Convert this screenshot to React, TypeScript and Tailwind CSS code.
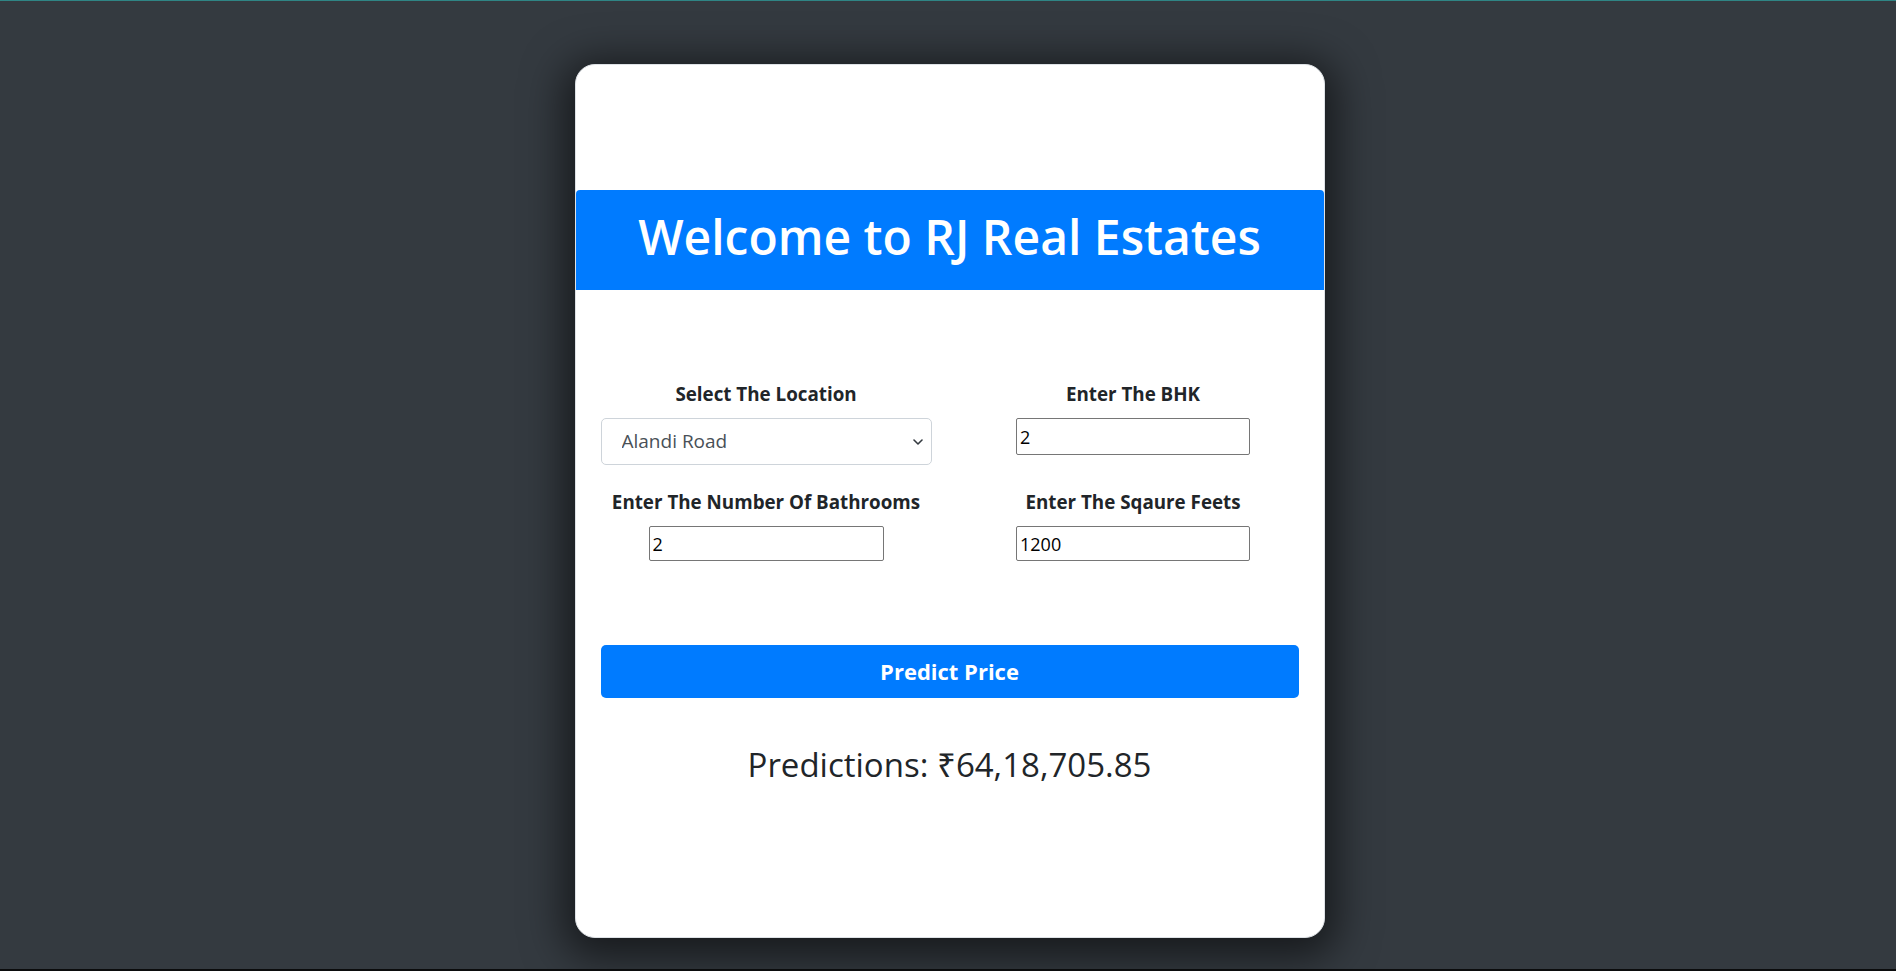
import { useState } from "react";

const locations = ["Alandi Road", "Ambegaon Budruk", "Aundh", "Baner", "Bavdhan", "Hadapsar", "Kothrud"];

export default function App() {
  const [location, setLocation] = useState("Alandi Road");
  const [bhk, setBhk] = useState("2");
  const [bath, setBath] = useState("2");
  const [sqft, setSqft] = useState("1200");

  return (
    <div className="min-h-screen flex flex-col bg-[#343a40] font-['Open_Sans',sans-serif]">
      <div className="h-px bg-[#2f8585]" />
      <div className="flex-1 flex justify-center pt-[63px] pl-[3px]">
        <div className="w-[750px] h-[874px] bg-white rounded-[20px] border border-[#dee2e6] shadow-[0_8px_40px_12px_rgba(0,0,0,0.55)] flex flex-col pt-[125px]">
          {/* Banner */}
          <div className="h-[100px] bg-[#007bff] rounded-t-[4px] flex items-center justify-center pb-[6px]">
            <h1 className="text-white text-[48px] font-semibold leading-none">Welcome to RJ Real Estates</h1>
          </div>

          {/* Form */}
          <div className="px-[25px] mt-[92px]">
            <div className="grid grid-cols-2 gap-x-[36px] gap-y-[25px]">
              <div className="flex flex-col items-center">
                <label className="text-[18.8px] leading-[24px] font-bold text-[#212529] mb-[12px]">Select The Location</label>
                <div className="relative w-full">
                  <select
                    value={location}
                    onChange={(e) => setLocation(e.target.value)}
                    className="appearance-none w-full h-[47px] border border-[#ced4da] rounded-[5px] pl-[20px] pr-8 text-[19px] text-[#495057] bg-white"
                  >
                    {locations.map((l) => (
                      <option key={l}>{l}</option>
                    ))}
                  </select>
                  <svg
                    className="absolute right-[9px] top-1/2 -translate-y-1/2 pointer-events-none"
                    width="10"
                    height="6"
                    viewBox="0 0 10 6"
                    fill="none"
                  >
                    <path d="M1 1l4 4 4-4" stroke="#343a40" strokeWidth="1.6" strokeLinecap="round" strokeLinejoin="round" />
                  </svg>
                </div>
              </div>

              <div className="flex flex-col items-center">
                <label className="text-[18.8px] leading-[24px] font-bold text-[#212529] mb-[12px]">Enter The BHK</label>
                <input
                  value={bhk}
                  onChange={(e) => setBhk(e.target.value)}
                  className="w-[234px] h-[37px] border border-[#767676] rounded-[2px] px-[3px] text-[18px] text-black"
                />
              </div>

              <div className="flex flex-col items-center">
                <label className="text-[18.8px] leading-[24px] font-bold text-[#212529] mb-[12px]">Enter The Number Of Bathrooms</label>
                <input
                  value={bath}
                  onChange={(e) => setBath(e.target.value)}
                  className="w-[235px] h-[35px] border border-[#767676] rounded-[2px] px-[3px] text-[18px] text-black"
                />
              </div>

              <div className="flex flex-col items-center">
                <label className="text-[18.8px] leading-[24px] font-bold text-[#212529] mb-[12px]">Enter The Sqaure Feets</label>
                <input
                  value={sqft}
                  onChange={(e) => setSqft(e.target.value)}
                  className="w-[234px] h-[35px] border border-[#767676] rounded-[2px] px-[3px] text-[18px] text-black"
                />
              </div>
            </div>

            <button className="mt-[84px] w-full h-[53px] bg-[#007bff] rounded-[5px] text-white text-[22px] font-bold">
              Predict Price
            </button>

            <h2 className="mt-[48px] text-center text-[33px] leading-[38px] font-medium text-[#212529]">
              Predictions: ₹64,18,705.85
            </h2>
          </div>
        </div>
      </div>
      <div className="h-[2px] bg-[#0b0c0d]" />
    </div>
  );
}
